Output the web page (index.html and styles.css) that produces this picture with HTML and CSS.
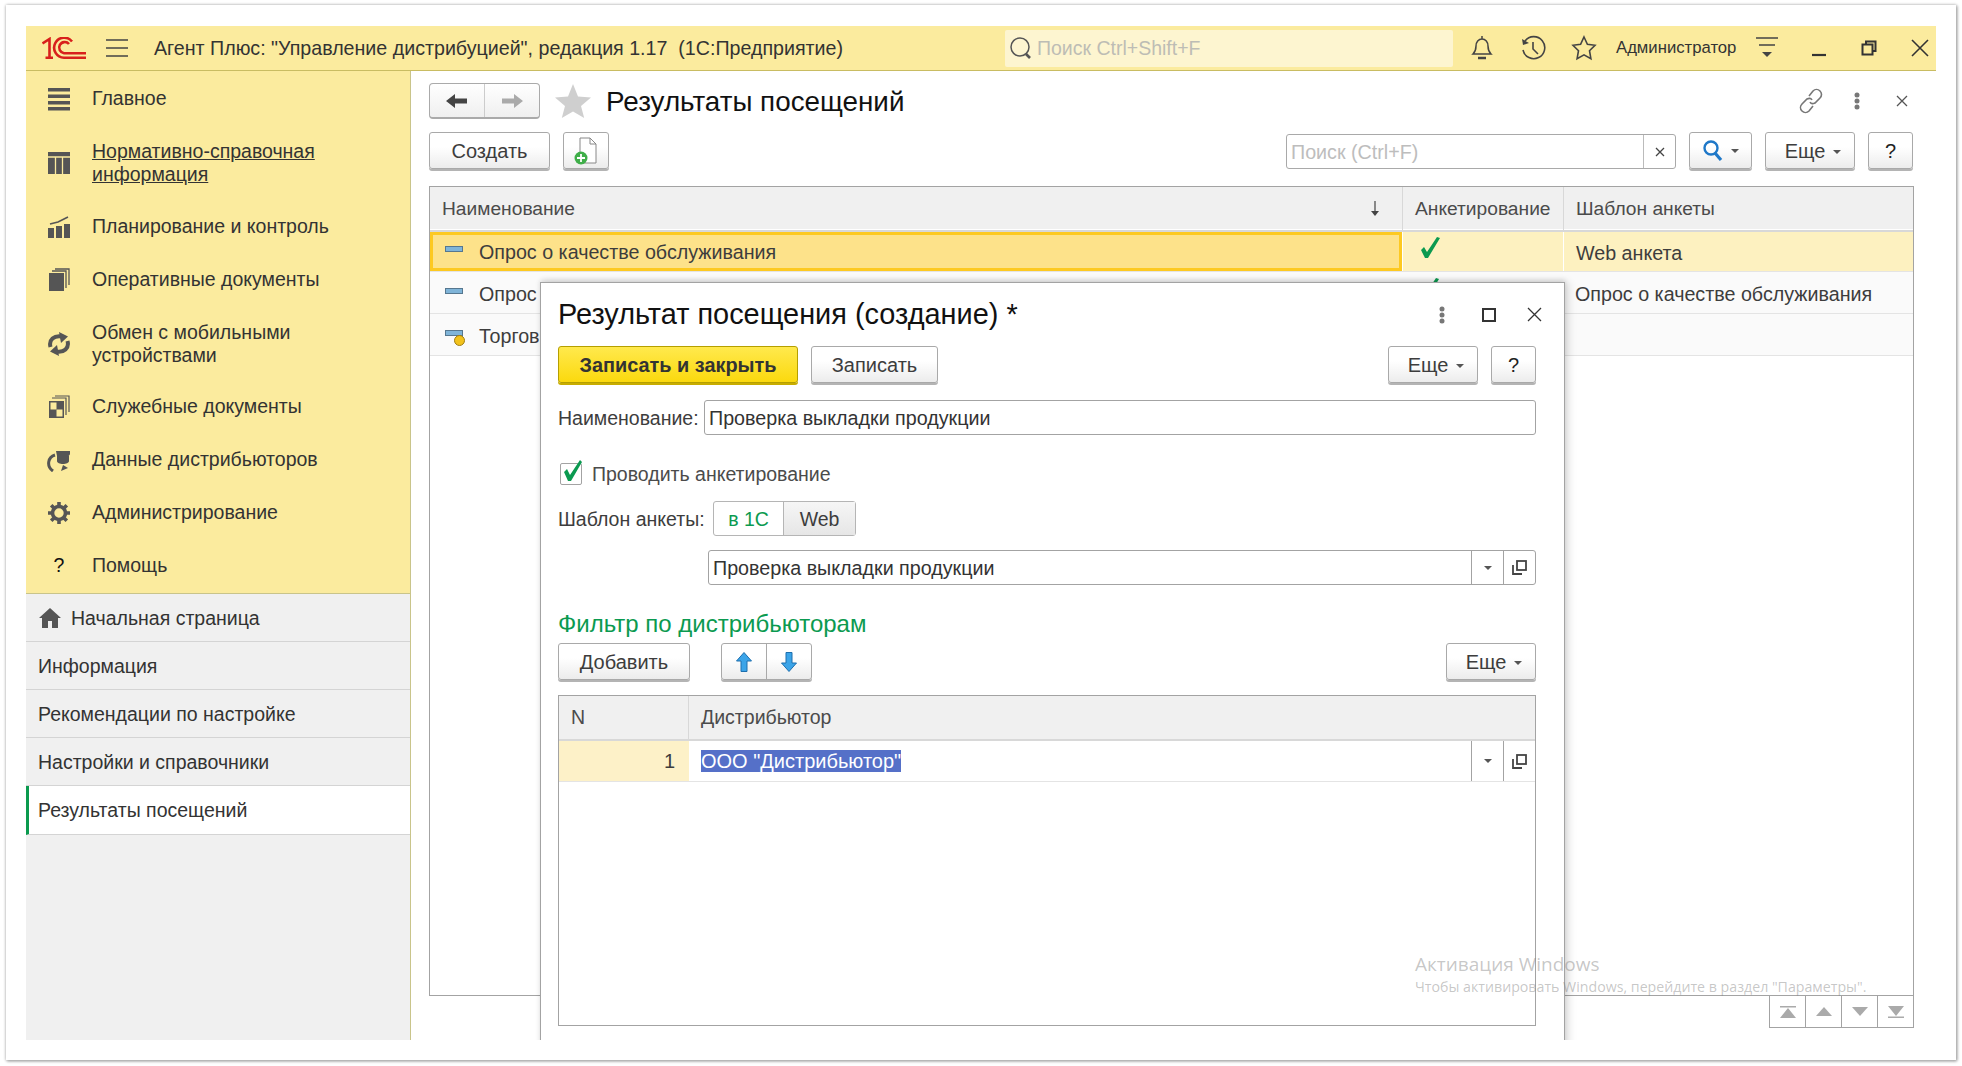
FILE: index.html
```html
<!DOCTYPE html>
<html lang="ru">
<head>
    <meta charset="UTF-8">
    <title>Результаты посещений</title>
    <link rel="stylesheet" href="styles.css">
</head>
<body>
<div class="window">
<div class="app">

    <header class="topbar">
        <svg class="logo" width="44" height="22" viewBox="0 0 44 22" fill="none" stroke="#d8201c" stroke-width="2.6">
            <path d="M0.5 6.5 L7.5 2 V21 M3.5 20.7 H11"/>
            <path d="M30 4.5 A10 10 0 1 0 22 20.7 H44"/>
            <path d="M27 7 A5.6 5.6 0 1 0 22 16.2 H44"/>
        </svg>
        <svg class="burger" width="22" height="18" viewBox="0 0 22 18" stroke="#444" stroke-width="1.6"><path d="M0 1H22M0 9H22M0 17H22"/></svg>
        <div class="app-title">Агент Плюс: "Управление дистрибуцией", редакция 1.17&nbsp; (1С:Предприятие)</div>
        <div class="global-search">
            <svg width="24" height="24" viewBox="0 0 24 24" fill="none" stroke="#555" stroke-width="1.5"><circle cx="11" cy="11" r="9"/><path d="M17 18l4 4" stroke-width="2.6"/></svg>
            <span>Поиск Ctrl+Shift+F</span>
        </div>
        <svg class="top-icon" width="24" height="26" viewBox="0 0 24 26" fill="none" stroke="#444" stroke-width="1.5"><path d="M3 19c2-2 3-4 3-8 0-4 2.500-7 6-7s6 3 6 7c0 4 1 6 3 8z M12 1v3"/><path d="M8 23h8" stroke-width="2.500"/></svg>
        <svg class="top-icon top-icon-wide" width="26" height="26" viewBox="0 0 26 26" fill="none" stroke="#444" stroke-width="1.6"><path d="M5 6A11 11 0 1 1 3 15"/><path d="M2 4l1 6 6-2" fill="#444" stroke="none"/><path d="M13 7v7l5 5"/></svg>
        <svg class="top-icon top-icon-star" width="26" height="26" viewBox="0 0 26 26" fill="none" stroke="#444" stroke-width="1.6"><path d="M13 2l3.400 7.300 7.600 1-5.500 5.400 1.400 8-6.900-3.900-6.900 3.900 1.400-8L2 10.300l7.600-1z"/></svg>
        <div class="user-name">Администратор</div>
        <svg class="top-icon top-icon-filter" width="22" height="24" viewBox="0 0 22 24" fill="#444"><path d="M0 2H22M3 9H19" stroke="#444" stroke-width="1.5"/><path d="M6 16H16L11 21z"/></svg>
        <svg class="win-icon" width="14" height="20" viewBox="0 0 14 20"><path d="M0 17H14" stroke="#333" stroke-width="2.200"/></svg>
        <svg class="win-icon win-icon-restore" width="16" height="16" viewBox="0 0 16 16" fill="none" stroke="#333" stroke-width="2"><path d="M5 4V1.500H14.500V11H12"/><rect x="1.500" y="4.500" width="10" height="10"/></svg>
        <svg class="win-icon" width="18" height="18" viewBox="0 0 18 18" stroke="#333" stroke-width="1.600"><path d="M1 1L17 17M17 1L1 17"/></svg>
    </header>

    <div class="workspace">
        <aside class="sidebar">
            <nav class="sections">
                <a class="section">
                    <svg viewBox="0 0 24 24" width="24" height="24" fill="#555"><rect x="1" y="1" width="22" height="3.500"/><rect x="1" y="7.500" width="22" height="3.500"/><rect x="1" y="14" width="22" height="3.500"/><rect x="1" y="20" width="22" height="3.500"/></svg>
                    <span>Главное</span>
                </a>
                <a class="section section-ref">
                    <svg viewBox="0 0 24 24" width="24" height="24"><rect x="1" y="1" width="22" height="22" fill="#555"/><path d="M8.500 6V23M15.500 6V23M1 6H23" stroke="#fbeb9e" stroke-width="1.300"/></svg>
                    <span class="link">Нормативно-справочная информация</span>
                </a>
                <a class="section">
                    <svg viewBox="0 0 24 24" width="24" height="24" fill="#555"><rect x="1" y="13" width="6" height="10"/><rect x="9" y="11" width="6" height="12"/><rect x="17" y="9" width="6" height="14"/><path d="M3 9L11 7L21 2" fill="none" stroke="#555" stroke-width="1.600"/></svg>
                    <span>Планирование и контроль</span>
                </a>
                <a class="section">
                    <svg viewBox="0 0 24 24" width="24" height="24" fill="#555"><rect x="2" y="5" width="15" height="18"/><path d="M5 3H19V20M8 1H22V17" fill="none" stroke="#555" stroke-width="1.300"/></svg>
                    <span>Оперативные документы</span>
                </a>
                <a class="section section-sync">
                    <svg viewBox="0 0 24 24" width="24" height="24" fill="none" stroke="#555" stroke-width="4"><path d="M3.500 15C1.500 8 7 3 15 4.500"/><path d="M20.500 9C22.500 16 17 21 9 19.500"/><path d="M12 0L21 4.500L14 11z" fill="#555" stroke="none"/><path d="M12 24L3 19.500L10 13z" fill="#555" stroke="none"/></svg>
                    <span>Обмен с мобильными устройствами</span>
                </a>
                <a class="section">
                    <svg viewBox="0 0 24 24" width="24" height="24" fill="#555"><rect x="2" y="6" width="15" height="17"/><rect x="3.500" y="7.500" width="6" height="7" fill="#fbeb9e"/><rect x="9.500" y="14.500" width="6" height="7" fill="#fbeb9e"/><path d="M5 3H19V20M8 1H22V17" fill="none" stroke="#555" stroke-width="1.200"/></svg>
                    <span>Служебные документы</span>
                </a>
                <a class="section">
                    <svg viewBox="0 0 24 24" width="24" height="24" fill="#555"><path d="M9 3h14v3c0 1-2 2-1 2v5c0 2-3 3-6 3s-6-1-6-3V8z"/><path d="M8 7C1 9-1 18 6 23" fill="none" stroke="#555" stroke-width="3"/><path d="M14 23l2-6 5 3z"/></svg>
                    <span>Данные дистрибьюторов</span>
                </a>
                <a class="section">
                    <svg viewBox="0 0 24 24" width="24" height="24" fill="none" stroke="#555"><circle cx="12" cy="12" r="6.500" stroke-width="3.600"/><path d="M12 1V5M12 19V23M1 12H5M19 12H23M4.200 4.200L7 7M17 17L19.800 19.800M19.800 4.200L17 7M7 17L4.200 19.800" stroke-width="3.600"/></svg>
                    <span>Администрирование</span>
                </a>
                <a class="section">
                    <b class="help-mark">?</b>
                    <span>Помощь</span>
                </a>
            </nav>
            <div class="tabs">
                <a class="tab">
                    <svg viewBox="0 0 22 20" width="22" height="20" fill="#555"><path d="M11 0L22 10H19V20H13V13H9V20H3V10H0z"/></svg>
                    Начальная страница
                </a>
                <a class="tab">Информация</a>
                <a class="tab">Рекомендации по настройке</a>
                <a class="tab">Настройки и справочники</a>
                <a class="tab active">Результаты посещений</a>
            </div>
        </aside>

        <main class="content">
            <div class="form-head">
                <div class="history">
                    <button class="history-btn"><svg width="22" height="16" viewBox="0 0 22 16" fill="#444"><path d="M0 8L9 1V5.500H21V10.500H9V15z"/></svg></button>
                    <button class="history-btn"><svg width="22" height="16" viewBox="0 0 22 16" fill="#aaa"><path d="M22 8L13 1V5.500H1V10.500H13V15z"/></svg></button>
                </div>
                <svg class="fav" width="36" height="34" viewBox="0 0 36 34" fill="#cfcfcf"><path d="M18 0l5 12.500 13 1-10 8.500 3.200 12L18 27.500 6.800 34 10 22 0 13.500l13-1z"/></svg>
                <h1 class="form-title">Результаты посещений</h1>
                <div class="head-tools">
                    <svg width="26" height="26" viewBox="0 0 26 26" fill="none" stroke="#777" stroke-width="1.600"><path d="M11 8l4-5c2-2 5-2 7 0s2 5 0 7l-5 5c-2 1-4 1-5-1"/><path d="M15 18l-4 5c-2 2-5 2-7 0s-2-5 0-7l5-5c2-1 4-1 5 1"/></svg>
                    <svg class="dots" width="6" height="18" viewBox="0 0 6 18" fill="#777"><circle cx="3" cy="3" r="2.500"/><circle cx="3" cy="9" r="2.500"/><circle cx="3" cy="15" r="2.500"/></svg>
                    <svg width="12" height="12" viewBox="0 0 12 12" stroke="#555" stroke-width="1.300"><path d="M1 1L11 11M11 1L1 11"/></svg>
                </div>
            </div>

            <div class="toolbar">
                <button class="btn btn-create">Создать</button>
                <button class="btn btn-doc">
                    <svg width="24" height="28" viewBox="0 0 24 28"><path d="M6 1H16L22 7V26H6z" fill="#fff" stroke="#888"/><path d="M16 1V7H22" fill="none" stroke="#888"/><circle cx="7" cy="21" r="6.500" fill="#3fae49"/><path d="M7 17V25M3 21H11" stroke="#fff" stroke-width="1.800"/></svg>
                </button>
                <div class="list-search">
                    <span class="list-search-text">Поиск (Ctrl+F)</span>
                    <span class="list-search-clear"><svg width="10" height="10" viewBox="0 0 10 10" stroke="#444" stroke-width="1.300"><path d="M1 1L9 9M9 1L1 9"/></svg></span>
                </div>
                <button class="btn btn-find">
                    <svg width="20" height="22" viewBox="0 0 20 22" fill="none" stroke="#1f78c8" stroke-width="2.400"><circle cx="8" cy="8" r="6.500"/><path d="M12 13l6 7" stroke-width="3.200"/></svg>
                    <i class="caret"></i>
                </button>
                <button class="btn btn-more">Еще<i class="caret"></i></button>
                <button class="btn btn-help">?</button>
            </div>

            <div class="list">
                <div class="list-row list-header">
                    <div class="cell">Наименование<span class="sort-arrow"><svg width="10" height="16" viewBox="0 0 10 16" fill="#444"><path d="M4.400 0H5.600V11H4.400z"/><path d="M1 10H9L5 15z"/></svg></span></div>
                    <div class="cell">Анкетирование</div>
                    <div class="cell">Шаблон анкеты</div>
                </div>
                <div class="list-row is-current">
                    <div class="cell cell-focus"><i class="row-icon"></i>Опрос о качестве обслуживания</div>
                    <div class="cell cell-check"><svg width="20" height="21" viewBox="0 0 20 21"><path d="M1 13L4 10L7 15L17 0L20 1L8 21H5z" fill="#0b9a50"/></svg></div>
                    <div class="cell">Web анкета</div>
                </div>
                <div class="list-row">
                    <div class="cell"><i class="row-icon"></i>Опрос</div>
                    <div class="cell cell-check"><svg width="20" height="21" viewBox="0 0 20 21"><path d="M1 13L4 10L7 15L17 0L20 1L8 21H5z" fill="#0b9a50"/></svg></div>
                    <div class="cell">Опрос о качестве обслуживания</div>
                </div>
                <div class="list-row">
                    <div class="cell"><i class="row-icon row-icon-mark"></i>Торгов</div>
                    <div class="cell"></div>
                    <div class="cell"></div>
                </div>
            </div>
            <div class="pager">
                <span class="pager-btn"><svg width="16" height="12" viewBox="0 0 16 12" fill="#aaa"><path d="M0 0H16V1.500H0z M8 2L16 12H0z"/></svg></span>
                <span class="pager-btn"><svg width="16" height="9" viewBox="0 0 16 9" fill="#aaa"><path d="M8 0L16 9H0z"/></svg></span>
                <span class="pager-btn"><svg width="16" height="9" viewBox="0 0 16 9" fill="#aaa"><path d="M8 9L16 0H0z"/></svg></span>
                <span class="pager-btn"><svg width="16" height="12" viewBox="0 0 16 12" fill="#aaa"><path d="M0 0H16L8 10z M0 10.500H16V12H0z"/></svg></span>
            </div>
        </main>
    </div>

    <section class="dialog">
        <div class="dialog-head">
            <h2 class="dialog-title">Результат посещения (создание) *</h2>
            <div class="dialog-tools">
                <svg class="dots" width="6" height="18" viewBox="0 0 6 18" fill="#777"><circle cx="3" cy="3" r="2.500"/><circle cx="3" cy="9" r="2.500"/><circle cx="3" cy="15" r="2.500"/></svg>
                <svg class="max-icon" width="14" height="14" viewBox="0 0 14 14" fill="none" stroke="#333" stroke-width="2"><rect x="1" y="1" width="12" height="12"/></svg>
                <svg width="15" height="15" viewBox="0 0 15 15" stroke="#333" stroke-width="1.300"><path d="M1 1L14 14M14 1L1 14"/></svg>
            </div>
        </div>

        <div class="dialog-bar">
            <button class="btn btn-primary">Записать и закрыть</button>
            <button class="btn btn-save">Записать</button>
            <button class="btn btn-more btn-push">Еще<i class="caret"></i></button>
            <button class="btn btn-help">?</button>
        </div>

        <div class="field-row name-row">
            <label class="field-label">Наименование:</label>
            <div class="input">Проверка выкладки продукции</div>
        </div>

        <div class="check-row">
            <span class="checkbox"><svg width="22" height="24" viewBox="0 0 22 24"><path d="M4 12L7 9L10 15L20 0L22 2L11 21H8z" fill="#0b9a50"/></svg></span>
            <span class="check-label">Проводить анкетирование</span>
        </div>

        <div class="field-row template-row">
            <label class="field-label">Шаблон анкеты:</label>
            <div class="segment">
                <span class="segment-on">в 1С</span>
                <span class="segment-off">Web</span>
            </div>
        </div>

        <div class="input combo">
            <span class="combo-text">Проверка выкладки продукции</span>
            <span class="combo-btn"><i class="caret"></i></span>
            <span class="combo-btn">
                <svg width="15" height="15" viewBox="0 0 15 15" fill="none" stroke="#444" stroke-width="1.800"><rect x="5" y="1" width="9" height="9"/><path d="M1 5V14H10"/></svg>
            </span>
        </div>

        <h3 class="group-title">Фильтр по дистрибьюторам</h3>

        <div class="group-bar">
            <button class="btn btn-add">Добавить</button>
            <div class="move-group">
                <button class="move-btn"><svg width="16" height="20" viewBox="0 0 16 20"><path d="M8 0.500L15.500 9H11V19.500H5V9H0.500z" fill="#3ba4e8" stroke="#1d6fae"/></svg></button>
                <button class="move-btn"><svg width="16" height="20" viewBox="0 0 16 20"><path d="M8 19.500L15.500 11H11V0.500H5V11H0.500z" fill="#3ba4e8" stroke="#1d6fae"/></svg></button>
            </div>
            <button class="btn btn-more btn-push">Еще<i class="caret"></i></button>
        </div>

        <div class="sub-table">
            <div class="sub-row sub-header">
                <div class="sub-n">N</div>
                <div class="sub-name">Дистрибьютор</div>
            </div>
            <div class="sub-row sub-current">
                <div class="sub-n">1</div>
                <div class="sub-name">
                    <span class="sub-value"><span class="selection">ООО "Дистрибьютор"</span></span>
                    <span class="combo-btn"><i class="caret"></i></span>
                    <span class="combo-btn">
                        <svg width="15" height="15" viewBox="0 0 15 15" fill="none" stroke="#444" stroke-width="1.800"><rect x="5" y="1" width="9" height="9"/><path d="M1 5V14H10"/></svg>
                    </span>
                </div>
            </div>
        </div>
    </section>

    <div class="activation">
        <div class="activation-title">Активация Windows</div>
        <div class="activation-note">Чтобы активировать Windows, перейдите в раздел "Параметры".</div>
    </div>
</div>
</div>
</body>
</html>
```
FILE: styles.css
```css
html,
body {
    margin: 0;
    padding: 0;
    height: 100%;
    background: #fff;
    overflow: hidden;
}

body {
    font-family: "Liberation Sans", Arial, sans-serif;
    font-size: 19.5px;
    color: #3d3d3d;
}

h1, h2, h3 {
    margin: 0;
    font-weight: normal;
}

button {
    font: inherit;
    color: inherit;
    padding: 0;
}

/* outer screenshot frame */
.window {
    margin: 5px 6px 0;
    width: 1950px;
    height: 1055px;
    box-sizing: border-box;
    padding: 21px 20px 20px;
    background: #fff;
    box-shadow: 0 0 3px #bbb, 1px 1px 3px #888;
}

.app {
    position: relative;
    width: 1910px;
    height: 1014px;
    overflow: hidden;
    display: flex;
    flex-direction: column;
}

/* top bar */
.topbar {
    flex: none;
    height: 45px;
    box-sizing: border-box;
    border-bottom: 1px solid #c9bc62;
    background: #fbeb9e;
    display: flex;
    align-items: center;
}

.logo {
    margin-left: 16px;
    flex: none;
}

.burger {
    margin-left: 20px;
    flex: none;
}

.app-title {
    margin-left: 26px;
    width: 851px;
    white-space: nowrap;
    font-size: 19.65px;
    color: #333;
}

.global-search {
    width: 448px;
    height: 37px;
    border-radius: 2px;
    background: #fdf5d0;
    display: flex;
    align-items: center;
    gap: 4px;
    padding-left: 4px;
    box-sizing: border-box;
    color: #bdbdb5;
}

.top-icon {
    flex: none;
    margin-left: 17px;
}

.top-icon-wide {
    margin-left: 26px;
}

.top-icon-star {
    margin-left: 25px;
}

.top-icon-filter {
    margin-left: 15px;
}

.user-name {
    margin-left: 19px;
    font-size: 16.7px;
    width: 125px;
    white-space: nowrap;
    color: #333;
}

.win-icon {
    flex: none;
    margin-left: 34px;
}

.win-icon-restore {
    margin-left: 35px;
}

/* layout under the top bar */
.workspace {
    flex: 1;
    display: flex;
    min-height: 0;
}

.sidebar {
    flex: none;
    width: 385px;
    box-sizing: border-box;
    border-right: 1px solid #c9c48a;
    background: #f0f0f0;
    display: flex;
    flex-direction: column;
}

.sections {
    background: #fbeb9e;
    height: 523px;
    box-sizing: border-box;
    border-bottom: 1px solid #c9c48a;
    padding-top: 1px;
}

.section {
    display: flex;
    align-items: center;
    gap: 21px;
    padding: 15px 20px 15px 21px;
    line-height: 23px;
    color: #333;
}

.section-ref {
    padding-bottom: 14px;
}

.section-sync {
    padding-bottom: 13px;
}

.section svg {
    flex: none;
    margin: -1px 0;
}

.section .link {
    text-decoration: underline;
}

.help-mark {
    flex: none;
    width: 24px;
    text-align: center;
    font-weight: normal;
    color: #111;
}

.tab {
    display: flex;
    align-items: center;
    gap: 10px;
    height: 48px;
    box-sizing: border-box;
    padding: 1px 12px 0;
    border-bottom: 1px solid #d4d4d4;
    color: #333;
}

.tab svg {
    margin-left: 1px;
}

.tab.active {
    background: #fff;
    border-left: 3px solid #0a9a4e;
    padding-left: 9px;
    height: 49px;
}

/* list form */
.content {
    flex: 1;
    min-width: 0;
    padding: 12px 22px 0 18px;
    background: #fff;
}

.form-head {
    display: flex;
    align-items: center;
    height: 36px;
}

.history {
    display: flex;
    width: 111px;
    height: 36px;
    box-sizing: border-box;
    border: 1px solid #aaa;
    border-bottom-width: 2px;
    border-radius: 4px;
    background: linear-gradient(#fff, #efefef);
}

.history-btn {
    flex: 1;
    border: 0;
    background: none;
    display: flex;
    align-items: center;
    justify-content: center;
}

.history-btn + .history-btn {
    border-left: 1px solid #ccc;
}

.fav {
    margin-left: 15px;
}

.form-title {
    margin-left: 15px;
    padding-top: 1px;
    font-size: 27.8px;
    color: #111;
}

.head-tools {
    margin-left: auto;
    display: flex;
    align-items: center;
    gap: 33px;
    padding-right: 6px;
}

.head-tools .dots {
    margin: 0 3px 0 -3px;
}

.toolbar {
    margin-top: 13px;
    padding-right: 1px;
    display: flex;
    align-items: flex-start;
    height: 40px;
}

.btn {
    height: 37px;
    box-sizing: border-box;
    border: 1px solid #a9a9a9;
    border-radius: 3px;
    background: linear-gradient(#fff 40%, #ececec);
    box-shadow: 0 2px 0 #b4b4b4;
    flex: none;
    display: flex;
    align-items: center;
    justify-content: center;
    padding-top: 2px;
    font-size: 20px;
    color: #3d3d3d;
}

.btn-create {
    width: 121px;
}

.btn-doc {
    width: 46px;
    margin-left: 13px;
    padding-top: 0;
}

.list-search {
    margin-left: auto;
    margin-top: 2px;
    width: 390px;
    height: 35px;
    box-sizing: border-box;
    border: 1px solid #a9a9a9;
    border-radius: 3px;
    display: flex;
    align-items: center;
}

.list-search-text {
    flex: 1;
    padding: 1px 0 0 4px;
    font-size: 19.7px;
    color: #bdbdbd;
}

.list-search-clear {
    width: 31px;
    height: 100%;
    border-left: 1px solid #bbb;
    display: flex;
    align-items: center;
    justify-content: center;
}

.btn-find {
    width: 63px;
    margin-left: 13px;
    gap: 8px;
    padding-top: 0;
}

.btn-more {
    width: 90px;
    margin-left: 13px;
    gap: 8px;
    padding-left: 6px;
}

.btn-help {
    width: 45px;
    margin-left: 13px;
    color: #222;
}

.caret {
    display: inline-block;
    width: 0;
    height: 0;
    border-left: 4px solid transparent;
    border-right: 4px solid transparent;
    border-top: 4px solid #555;
}

.list {
    margin-top: 14px;
    height: 810px;
    box-sizing: border-box;
    border: 1px solid #a3a3a3;
}

.list-row {
    display: grid;
    grid-template-columns: 972px 161px 1fr;
    height: 42px;
    box-sizing: border-box;
    border-bottom: 1px solid #e4e4e4;
    background: #fafafa;
    font-size: 19.7px;
}

.list-row .cell {
    display: flex;
    align-items: center;
    padding: 3px 0 0 12px;
    white-space: nowrap;
    overflow: hidden;
}

.list-header {
    height: 45px;
    background: #f0f0f0;
    border-bottom: 2px solid #d8d8d8;
    box-shadow: inset 0 -1px 0 #fff;
    font-size: 19.2px;
    color: #4b4b4b;
}

.list-header .cell {
    padding-top: 0;
}

.list-header .cell + .cell {
    border-left: 1px solid #d8d8d8;
}

.sort-arrow {
    margin-left: auto;
    padding-right: 22px;
    display: flex;
}

.is-current {
    background: #fdf1c0;
    height: 40px;
}

.is-current .cell + .cell {
    border-left: 1px solid #fff;
}

.list-row .cell-focus {
    background: #fde28a;
    border: 3px solid #fdc921;
    padding: 1px 0 0 12px;
    box-sizing: border-box;
}

.list-row:not(.is-current):not(.list-header) .cell:first-child {
    padding-left: 15px;
}

.row-icon {
    position: relative;
    flex: none;
    width: 18px;
    height: 6px;
    margin-right: 16px;
    margin-top: -6px;
    box-sizing: border-box;
    background: #7fb4d8;
    border: 1px solid #56778f;
}

.row-icon-mark::after {
    content: "";
    position: absolute;
    right: -3px;
    top: 4px;
    width: 9px;
    height: 9px;
    border-radius: 50%;
    background: #f2c21c;
    border: 1px solid #a07d10;
}

.list-row .cell-check {
    padding: 0 0 8px 17px;
    overflow: visible;
}

.pager {
    display: flex;
    justify-content: flex-end;
}

.pager-btn {
    width: 37px;
    height: 32px;
    box-sizing: border-box;
    border: 1px solid #a3a3a3;
    border-top: 0;
    margin-left: -1px;
    display: flex;
    align-items: center;
    justify-content: center;
}

/* dialog over the list */
.dialog {
    position: absolute;
    left: 514px;
    top: 256px;
    width: 1025px;
    height: 800px;
    box-sizing: border-box;
    padding: 0 28px 0 17px;
    background: #fff;
    border: 1px solid #a3a3a3;
    box-shadow: 0 -2px 5px rgba(0, 0, 0, .12), 4px 0 8px rgba(0, 0, 0, .12);
}

.dialog-head {
    height: 63px;
    display: flex;
    align-items: center;
}

.dialog-title {
    font-size: 28.9px;
    color: #111;
}

.dialog-tools {
    margin-left: auto;
    display: flex;
    align-items: center;
    gap: 34px;
    margin-right: -6px;
}

.max-icon {
    margin: 0 -3px 0 3px;
}

.dialog-bar,
.group-bar {
    display: flex;
    height: 40px;
}

.btn-primary {
    width: 240px;
    font-weight: bold;
    font-size: 19.9px;
    color: #333;
    border-color: #b59f00;
    background: linear-gradient(#ffe94d, #fbd90e);
    box-shadow: 0 2px 0 #c8ad00;
}

.btn-save {
    width: 127px;
    margin-left: 13px;
}

.btn-push {
    margin-left: auto;
}

.field-row {
    display: flex;
    align-items: center;
}

.name-row {
    margin-top: 14px;
}

.field-label {
    flex: none;
    white-space: nowrap;
    padding-top: 2px;
    color: #3d3d3d;
}

.name-row .field-label {
    width: 137px;
}

.template-row .field-label {
    width: 146px;
}

.input {
    height: 35px;
    box-sizing: border-box;
    border: 1px solid #a3a3a3;
    border-radius: 3px;
    padding-left: 4px;
    line-height: 33px;
    font-size: 19.7px;
    color: #333;
}

.name-row .input {
    flex: 1;
    margin-left: 9px;
    padding-top: 1px;
}

.check-row {
    margin-top: 28px;
    height: 22px;
    display: flex;
    align-items: center;
    padding-left: 2px;
}

.checkbox {
    position: relative;
    width: 22px;
    height: 22px;
    box-sizing: border-box;
    border: 1px solid #a3a3a3;
    border-radius: 2px;
}

.checkbox svg {
    position: absolute;
    left: -1px;
    top: -4px;
}

.check-label {
    margin-left: 10px;
    color: #4b4b4b;
}

.template-row {
    margin-top: 16px;
}

.segment {
    margin-left: 9px;
    display: flex;
    height: 35px;
    box-sizing: border-box;
    border: 1px solid #b5b5b5;
    border-radius: 3px;
    line-height: 35px;
    text-align: center;
}

.segment-on {
    width: 69px;
    color: #0b9a50;
    border-right: 1px solid #b5b5b5;
}

.segment-off {
    width: 71px;
    background: linear-gradient(#f6f6f6, #e6e6e6);
}

.combo {
    margin: 14px 0 0 150px;
    display: flex;
}

.combo-text {
    flex: 1;
    padding-top: 1px;
}

.combo-btn {
    flex: none;
    width: 31px;
    align-self: stretch;
    border-left: 1px solid #a3a3a3;
    display: flex;
    align-items: center;
    justify-content: center;
}

.group-title {
    margin-top: 25px;
    font-size: 24px;
    line-height: 28px;
    color: #0b9a50;
}

.group-bar {
    margin-top: 5px;
}

.btn-add {
    width: 132px;
}

.move-group {
    margin-left: 31px;
    width: 91px;
    height: 37px;
    box-sizing: border-box;
    display: flex;
    border: 1px solid #a9a9a9;
    border-radius: 3px;
    box-shadow: 0 2px 0 #b4b4b4;
    background: linear-gradient(#fff 40%, #ececec);
}

.move-btn {
    flex: 1;
    border: 0;
    background: none;
    display: flex;
    align-items: center;
    justify-content: center;
}

.move-btn + .move-btn {
    border-left: 1px solid #a9a9a9;
}

.sub-table {
    margin-top: 12px;
    height: 331px;
    box-sizing: border-box;
    border: 1px solid #a3a3a3;
}

.sub-row {
    display: flex;
}

.sub-n {
    flex: none;
    width: 130px;
    box-sizing: border-box;
    padding: 0 14px 0 12px;
}

.sub-header {
    height: 45px;
    background: #f0f0f0;
    border-bottom: 2px solid #d8d8d8;
    box-sizing: border-box;
    line-height: 43px;
    color: #4b4b4b;
}

.sub-header .sub-n {
    border-right: 1px solid #d8d8d8;
}

.sub-name {
    flex: 1;
    padding-left: 12px;
    display: flex;
}

.sub-current {
    height: 41px;
    box-sizing: border-box;
    border-bottom: 1px solid #e4e4e4;
    line-height: 41px;
    font-size: 20px;
}

.sub-current .sub-n {
    background: #fdf1c8;
    text-align: right;
}

.sub-value {
    flex: 1;
}

.selection {
    background: #5570c8;
    color: #fff;
}

/* windows watermark */
.activation {
    position: absolute;
    left: 1389px;
    top: 925px;
    color: rgba(130, 130, 130, .45);
    font-family: "Open Sans", sans-serif;
    white-space: nowrap;
    pointer-events: none;
}

.activation-title {
    font-size: 19px;
    line-height: 26px;
}

.activation-note {
    font-size: 14.2px;
    line-height: 20px;
}
```
